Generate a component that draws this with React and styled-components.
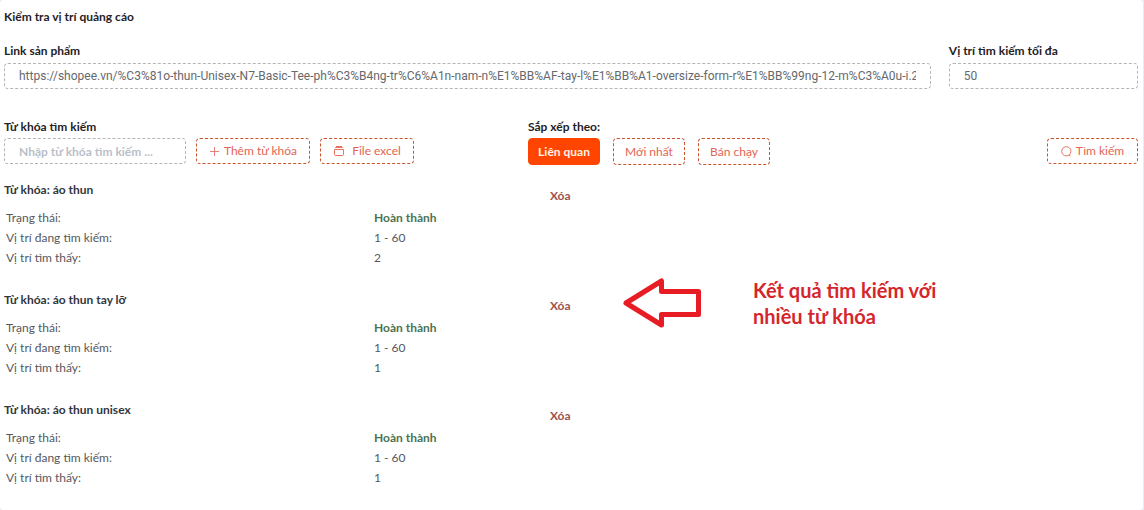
import React from 'react';
import styled, { createGlobalStyle, css } from 'styled-components';

const GlobalStyle = createGlobalStyle`
  * {
    box-sizing: border-box;
  }
  body {
    margin: 0;
    background: #e9edf2;
    font-family: Lato, 'Liberation Sans', sans-serif;
    font-size: 12px;
    line-height: 20px;
    color: #55585d;
  }
  button,
  input {
    font: inherit;
  }
`;

const Card = styled.main`
  margin-right: 1px;
  min-height: 100vh;
  padding: 7px 5px 0 4px;
  background: #fff;
  border-radius: 4px;
`;

const Title = styled.h1`
  margin: 0 0 14px;
  font-size: 12px;
  font-weight: 700;
  line-height: 20px;
  color: #1f2226;
`;

const FieldRow = styled.div`
  display: grid;
  grid-template-columns: 49fr 10fr;
  gap: 18px;
  margin-bottom: 28px;
`;

const Field = styled.div`
  display: flex;
  flex-direction: column;
  gap: 2px;
`;

const labelStyle = css`
  display: block;
  font-size: 12px;
  font-weight: 700;
  line-height: 20px;
  color: #1f2226;
`;

const Label = styled.label`
  ${labelStyle}
`;

const GroupLabel = styled.span`
  ${labelStyle}
`;

const TextInput = styled.input`
  width: ${(p) => p.$width || '100%'};
  height: 26px;
  padding: 0 14px;
  border: 1px dashed #b5b5b5;
  border-radius: 4px;
  background: #fff;
  color: #66696e;
  outline: none;

  &::placeholder {
    color: #b9bfc8;
    font-weight: 700;
    opacity: 1;
  }
`;

const ValueInput = styled(TextInput)`
  font-family: Roboto, 'Liberation Sans', sans-serif;
`;

const Toolbar = styled.div`
  display: grid;
  grid-template-columns: 524fr 610fr;
  margin-bottom: 15px;
`;

const Group = styled.div`
  display: flex;
  flex-direction: column;
  gap: 1px;
`;

const Controls = styled.div`
  display: flex;
  align-items: flex-start;
  gap: ${(p) => p.$gap}px;
`;

const Button = styled.button`
  display: inline-flex;
  align-items: center;
  justify-content: center;
  gap: ${(p) => p.$gap || 4}px;
  width: ${(p) => p.$width}px;
  height: ${(p) => p.$height || 26}px;
  padding: 0;
  border: 1px dashed #c9532c;
  border-radius: 4px;
  background: #fff;
  color: #e26454;
  cursor: pointer;

  ${(p) =>
    p.$active &&
    css`
      border: 1px solid #ff4500;
      background: #ff4500;
      color: #fff1e6;
      font-weight: 700;
    `}
`;

const SearchButton = styled(Button)`
  margin-left: auto;
`;

const Results = styled.section`
  display: flex;
  align-items: flex-start;
`;

const ResultList = styled.div`
  flex: 0 0 618px;
  display: flex;
  flex-direction: column;
  gap: 22px;
`;

const Result = styled.article`
  display: grid;
  grid-template-columns: 546px auto;
`;

const Keyword = styled.h2`
  margin: 0 0 8px;
  font-size: 12px;
  font-weight: 700;
  line-height: 20px;
  color: #33363b;
`;

const Details = styled.table`
  width: 100%;
  border-collapse: collapse;

  th,
  td {
    height: 20px;
    padding: 0 2px;
    text-align: left;
    font-weight: 400;
    line-height: 20px;
  }

  th {
    width: 368px;
  }
`;

const Done = styled.strong`
  color: #4a7352;
  font-weight: 700;
`;

const DeleteButton = styled.button`
  justify-self: start;
  align-self: start;
  margin-top: 6px;
  padding: 0;
  border: 0;
  background: none;
  color: #9c534e;
  font-weight: 700;
  line-height: 20px;
  cursor: pointer;
`;

const Note = styled.aside`
  display: flex;
  align-items: flex-start;
  gap: 49px;
  margin-top: 97px;
  color: #d4262c;
  font-size: 20px;
  font-weight: 700;
  line-height: 26px;

  p {
    margin: 0;
  }

  svg {
    flex: none;
  }
`;

const PlusIcon = () => (
  <svg width="11" height="11" viewBox="0 0 11 11" fill="none" stroke="currentColor" strokeWidth="0.8" aria-hidden="true">
    <path d="M5.5 1v9M1 5.5h9" />
  </svg>
);

const BoxIcon = () => (
  <svg width="12" height="12" viewBox="0 0 12 12" fill="none" stroke="currentColor" strokeWidth="0.9" aria-hidden="true">
    <path d="M3 1.5h6M2 3.2q0-.7.7-.7h6.6q.7 0 .7.7" />
    <path d="M1.5 4.5h9v5q0 1-1 1h-7q-1 0-1-1z" />
  </svg>
);

const SearchIcon = () => (
  <svg width="11" height="11" viewBox="0 0 11 11" fill="none" stroke="currentColor" strokeWidth="0.9" aria-hidden="true">
    <circle cx="5.3" cy="5.3" r="4.6" />
    <path d="M7.8 8.8l1.8 1.2" />
  </svg>
);

const ArrowIcon = () => (
  <svg width="82" height="54" viewBox="0 0 82 54" fill="none" stroke="#e81c24" strokeWidth="5" strokeLinejoin="round" aria-hidden="true">
    <path d="M4 26L39.5 4v10.5h37v23h-37V48z" />
  </svg>
);

const productUrl =
  'https://shopee.vn/%C3%81o-thun-Unisex-N7-Basic-Tee-ph%C3%B4ng-tr%C6%A1n-nam-n%E1%BB%AF-tay-l%E1%BB%A1-oversize-form-r%E1%BB%99ng-12-m%C3%A0u-i.2573';

const results = [
  { keyword: 'áo thun', range: '1 - 60', found: 2 },
  { keyword: 'áo thun tay lỡ', range: '1 - 60', found: 1 },
  { keyword: 'áo thun unisex', range: '1 - 60', found: 1 },
];

export default function App() {
  return (
    <>
      <GlobalStyle />
      <Card>
        <Title>Kiểm tra vị trí quảng cáo</Title>

        <FieldRow>
          <Field>
            <Label htmlFor="link">Link sản phẩm</Label>
            <ValueInput id="link" defaultValue={productUrl} />
          </Field>
          <Field>
            <Label htmlFor="limit">Vị trí tìm kiếm tối đa</Label>
            <ValueInput id="limit" defaultValue="50" />
          </Field>
        </FieldRow>

        <Toolbar>
          <Group>
            <Label htmlFor="keyword">Từ khóa tìm kiếm</Label>
            <Controls $gap={10}>
              <TextInput id="keyword" $width="182px" placeholder="Nhập từ khóa tìm kiếm ..." />
              <Button type="button" $width={114}>
                <PlusIcon />
                Thêm từ khóa
              </Button>
              <Button type="button" $width={94} $gap={7}>
                <BoxIcon />
                File excel
              </Button>
            </Controls>
          </Group>
          <Group>
            <GroupLabel id="sort-label">Sắp xếp theo:</GroupLabel>
            <Controls $gap={13} role="group" aria-labelledby="sort-label">
              <Button type="button" $width={72} $height={27} $active>
                Liên quan
              </Button>
              <Button type="button" $width={72} $height={27}>
                Mới nhất
              </Button>
              <Button type="button" $width={72} $height={27}>
                Bán chạy
              </Button>
              <SearchButton type="button" $width={91}>
                <SearchIcon />
                Tìm kiếm
              </SearchButton>
            </Controls>
          </Group>
        </Toolbar>

        <Results>
          <ResultList>
            {results.map((item) => (
              <Result key={item.keyword}>
                <div>
                  <Keyword>Từ khóa: {item.keyword}</Keyword>
                  <Details>
                    <tbody>
                      <tr>
                        <th scope="row">Trạng thái:</th>
                        <td>
                          <Done>Hoàn thành</Done>
                        </td>
                      </tr>
                      <tr>
                        <th scope="row">Vị trí đang tìm kiếm:</th>
                        <td>{item.range}</td>
                      </tr>
                      <tr>
                        <th scope="row">Vị trí tìm thấy:</th>
                        <td>{item.found}</td>
                      </tr>
                    </tbody>
                  </Details>
                </div>
                <DeleteButton type="button">Xóa</DeleteButton>
              </Result>
            ))}
          </ResultList>
          <Note>
            <ArrowIcon />
            <p>
              Kết quả tìm kiếm với
              <br />
              nhiều từ khóa
            </p>
          </Note>
        </Results>
      </Card>
    </>
  );
}
